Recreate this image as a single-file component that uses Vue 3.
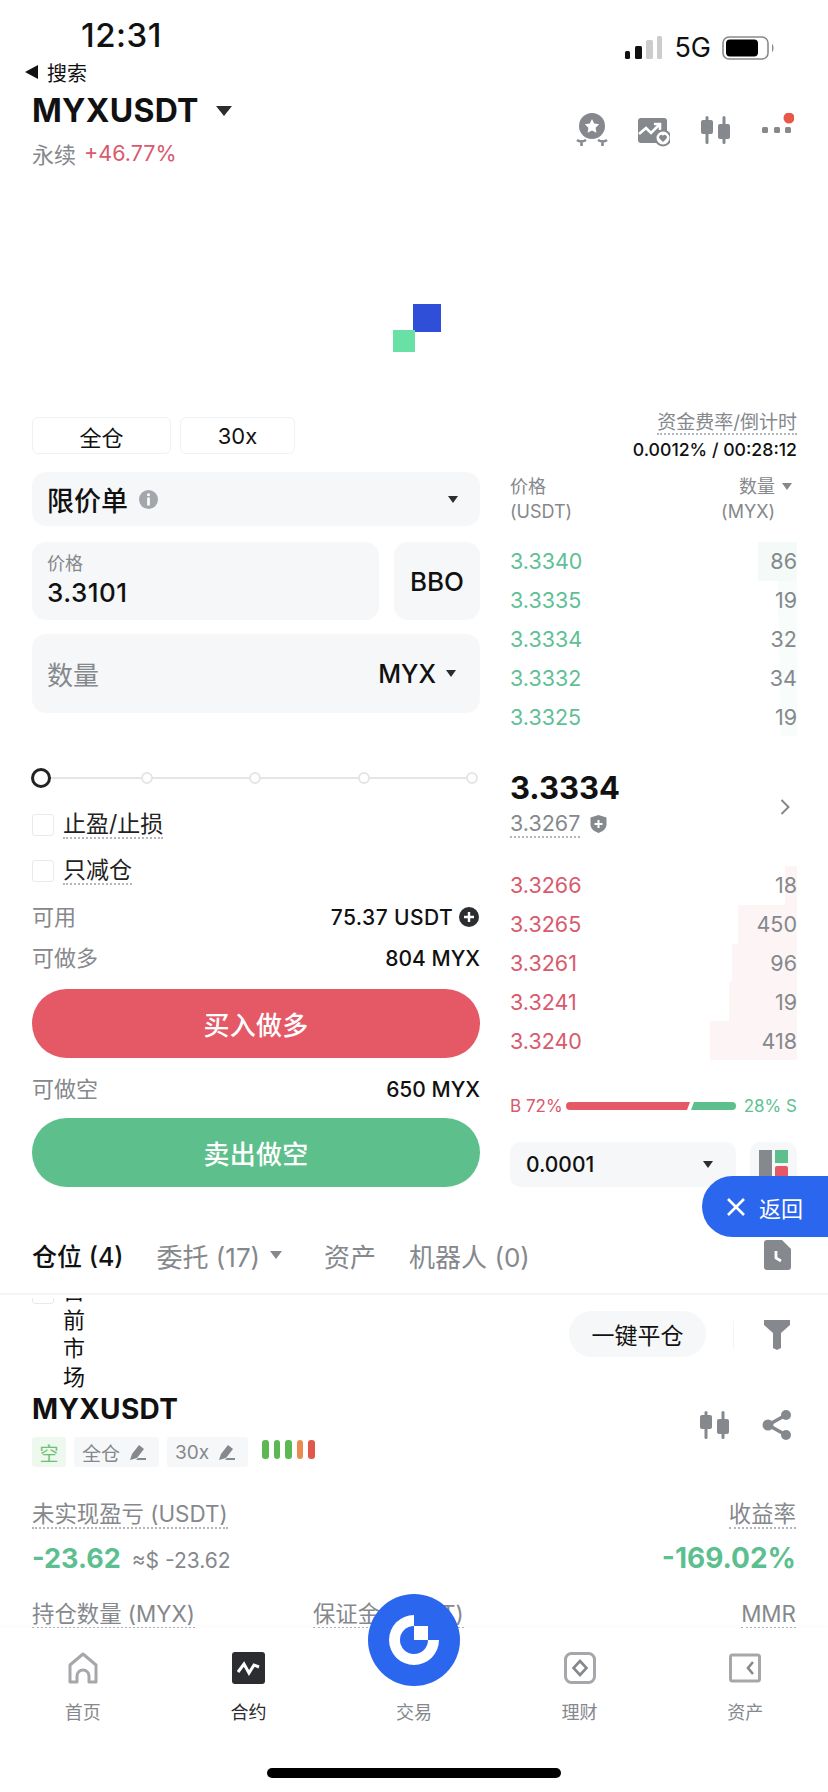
<template>
  <div class="page">
    <div class="status">
      <span class="time">12:31</span>
      <div class="status-right">
        <svg width="38" height="24" viewBox="0 0 38 24">
          <rect x="0" y="15" width="5" height="8" rx="1.5" fill="#111" />
          <rect x="10" y="10" width="7" height="13" rx="1.5" fill="#111" />
          <rect x="21" y="4" width="7" height="19" rx="1.5" fill="#ccc" />
          <rect x="32" y="0" width="5" height="23" rx="1.5" fill="#ccc" />
        </svg>
        <span class="net">5G</span>
        <svg width="54" height="24" viewBox="0 0 54 24">
          <rect x="1" y="1" width="45" height="22" rx="6" fill="none" stroke="#8a8a8a" stroke-width="1.6" />
          <rect x="4" y="3.5" width="32" height="17" rx="4" fill="#000" />
          <path d="M50 8c2 1 2 7 0 8z" fill="#8a8a8a" />
        </svg>
      </div>
    </div>

    <div class="back"><i class="back-arrow"></i><span>搜索</span></div>

    <header class="head">
      <div>
        <div class="pair">MYXUSDT<i class="caret caret-title"></i></div>
        <div class="sub"><span>永续</span><span class="up">+46.77%</span></div>
      </div>
      <div class="head-icons">
        <svg width="32" height="34" viewBox="0 0 32 34">
          <circle cx="16" cy="13" r="13" fill="#85888c" />
          <path d="M16 6l2.2 4.6 5 .7-3.6 3.5.8 5-4.4-2.3-4.4 2.3.8-5-3.6-3.5 5-.7z" fill="#fff" />
          <path d="M1 27q4 3 9 0M5.500 29v4M22 27q5 3 9 0M26.500 29v4" fill="none" stroke="#85888c" stroke-width="2.600" />
        </svg>
        <svg width="32" height="34" viewBox="0 0 32 34">
          <rect x="0" y="5" width="29" height="25" rx="3" fill="#85888c" />
          <path d="M1 21l7-6 5 5 8-8M16 11h6v6" fill="none" stroke="#fff" stroke-width="2.600" />
          <circle cx="25" cy="25" r="7.500" fill="#fff" stroke="#85888c" stroke-width="2" />
          <path d="M25 29l-3.500-3.500a2.200 2.200 0 0 1 3.500-2.700 2.200 2.200 0 0 1 3.500 2.700z" fill="#85888c" />
        </svg>
        <svg width="32" height="34" viewBox="0 0 32 34">
          <rect x="1" y="7" width="12" height="14" rx="2" fill="#85888c" />
          <rect x="5.500" y="3" width="3" height="28" rx="1.500" fill="#85888c" />
          <rect x="18" y="11" width="12" height="15" rx="2" fill="#85888c" />
          <rect x="22.500" y="3" width="3" height="28" rx="1.500" fill="#85888c" />
        </svg>
        <svg width="32" height="34" viewBox="0 0 32 34">
          <rect x="0" y="14" width="6" height="6" rx="1.500" fill="#85888c" />
          <rect x="12" y="14" width="6" height="6" rx="1.500" fill="#85888c" />
          <rect x="23" y="14" width="6" height="6" rx="1.500" fill="#85888c" />
          <circle cx="27" cy="5" r="5.500" fill="#e8584a" />
        </svg>
      </div>
    </header>

    <div class="chart">
      <div class="loader">
        <i class="sq-blue"></i>
        <i class="sq-green"></i>
      </div>
    </div>

    <section class="trade">
      <div class="form">
        <div class="modes">
          <span class="mode mode-wide">全仓</span>
          <span class="mode mode-small">30x</span>
        </div>
        <div class="field order-type">
          <span class="order-name">限价单</span>
          <svg width="19" height="19" viewBox="0 0 19 19">
            <circle cx="9.500" cy="9.500" r="9.500" fill="#a3a6aa" />
            <rect x="8.200" y="3.500" width="2.600" height="2.600" fill="#fff" />
            <rect x="8.200" y="7.500" width="2.600" height="8" fill="#fff" />
          </svg>
          <i class="caret caret-end"></i>
        </div>
        <div class="price-row">
          <div class="field price">
            <span class="price-label">价格</span>
            <span class="price-value">3.3101</span>
          </div>
          <div class="field bbo">BBO</div>
        </div>
        <div class="field qty">
          <span class="qty-label">数量</span>
          <span class="qty-unit">MYX<i class="caret"></i></span>
        </div>
        <div class="slider">
          <i class="knob"></i>
          <i v-for="n in 4" :key="n" class="stop"></i>
        </div>
        <label class="check check-first"><i class="box"></i><span class="dot-line">止盈/止损</span></label>
        <label class="check check-second"><i class="box"></i><span class="dot-line">只减仓</span></label>
        <div class="info info-first">
          <span class="muted">可用</span>
          <span class="info-value">75.37 USDT
            <svg width="20" height="20" viewBox="0 0 20 20">
              <circle cx="10" cy="10" r="10" fill="#2b2d31" />
              <path d="M10 5v10M5 10h10" stroke="#fff" stroke-width="2.400" />
            </svg>
          </span>
        </div>
        <div class="info info-long">
          <span class="muted">可做多</span>
          <span class="info-value">804 MYX</span>
        </div>
        <button class="action buy">买入做多</button>
        <div class="info">
          <span class="muted">可做空</span>
          <span class="info-value">650 MYX</span>
        </div>
        <button class="action sell">卖出做空</button>
      </div>

      <div class="book">
        <div class="funding">
          <span class="funding-label">资金费率/倒计时</span>
          <span class="funding-value">0.0012% / 00:28:12</span>
        </div>
        <div class="book-head">
          <div>价格<br />(USDT)</div>
          <div class="book-head-right">
            <div class="book-qty">数量<br />(MYX)</div>
            <i class="caret caret-gray"></i>
          </div>
        </div>
        <div class="rows">
          <div v-for="row in asks" :key="row.price" class="row">
            <i class="depth depth-ask" :style="{ width: row.depth + 'px', opacity: row.depth > 20 ? 1 : 0.6 }"></i>
            <span class="ask-price">{{ row.price }}</span>
            <span class="row-qty">{{ row.qty }}</span>
          </div>
        </div>
        <div class="mid">
          <div>
            <div class="last">3.3334</div>
            <div class="mark">
              <span class="mark-value">3.3267</span>
              <svg width="17" height="18" viewBox="0 0 17 18">
                <path d="M8.500 0l8 2.500v7c0 4-3.500 7-8 8.500-4.500-1.500-8-4.500-8-8.500v-7z" fill="#85888c" />
                <path d="M8.500 5v8M4.500 9h8" stroke="#fff" stroke-width="2" />
              </svg>
            </div>
          </div>
          <svg class="chev" width="10" height="16" viewBox="0 0 10 16">
            <path d="M1.500 1l7 7-7 7" fill="none" stroke="#85888c" stroke-width="2" />
          </svg>
        </div>
        <div class="rows">
          <div v-for="row in bids" :key="row.price" class="row">
            <i class="depth depth-bid" :style="{ width: row.depth + 'px' }"></i>
            <span class="bid-price">{{ row.price }}</span>
            <span class="row-qty">{{ row.qty }}</span>
          </div>
        </div>
        <div class="ratio">
          <span class="ratio-b">B 72%</span>
          <i class="bar-buy"></i>
          <i class="bar-sell"></i>
          <span class="ratio-s">28% S</span>
        </div>
        <div class="book-foot">
          <div class="step">
            <span>0.0001</span>
            <i class="caret"></i>
          </div>
          <div class="layout-btn">
            <svg width="29" height="32" viewBox="0 0 29 32">
              <rect x="0" y="0" width="13" height="32" fill="#85888c" />
              <rect x="16" y="0" width="13" height="13" fill="#5dbf8b" />
              <rect x="16" y="16" width="13" height="16" rx="2" fill="#e55865" />
            </svg>
          </div>
        </div>
      </div>
    </section>

    <nav class="tabs">
      <span class="tab tab-active">仓位 (4)</span>
      <span class="tab">委托 (17)<i class="caret caret-tab"></i></span>
      <span class="tab">资产</span>
      <span class="tab">机器人 (0)</span>
      <svg class="doc" width="27" height="30" viewBox="0 0 27 30">
        <path d="M3 0h15l9 9v18a3 3 0 0 1-3 3H3a3 3 0 0 1-3-3V3a3 3 0 0 1 3-3z" fill="#85888c" />
        <path d="M12 11v7l5 3" fill="none" stroke="#fff" stroke-width="2.800" />
      </svg>
    </nav>

    <div class="list">
      <div class="toolbar">
        <i class="box toolbar-box"></i>
        <span class="narrow">目前市场</span>
        <button class="close-all">一键平仓</button>
        <i class="rule"></i>
        <svg class="funnel" width="26" height="30" viewBox="0 0 26 30">
          <path d="M0 0h26v5l-9 8v15l-4 2-4-2V13L0 5z" fill="#85888c" />
        </svg>
      </div>

      <div class="pos-head">
        <div>
          <div class="pos-name">MYXUSDT</div>
          <div class="tags">
            <span class="tag tag-short">空</span>
            <span class="tag">全仓
              <svg width="16" height="16" viewBox="0 0 16 16"><path d="M0 16l2-6 7-9 5 4-7 9zM8 14h8v2H6z" fill="#85888c" /></svg>
            </span>
            <span class="tag">30x
              <svg width="16" height="16" viewBox="0 0 16 16"><path d="M0 16l2-6 7-9 5 4-7 9zM8 14h8v2H6z" fill="#85888c" /></svg>
            </span>
            <span class="adl">
              <i v-for="c in adl" :key="c.id" :style="{ background: c.color }"></i>
            </span>
          </div>
        </div>
        <div class="pos-icons">
          <svg width="30" height="30" viewBox="0 0 30 30">
            <rect x="0" y="5" width="12" height="14" rx="2" fill="#85888c" />
            <rect x="4.500" y="1" width="3" height="28" rx="1.500" fill="#85888c" />
            <rect x="17" y="9" width="12" height="15" rx="2" fill="#85888c" />
            <rect x="21.500" y="1" width="3" height="28" rx="1.500" fill="#85888c" />
          </svg>
          <svg width="30" height="30" viewBox="0 0 30 30">
            <path d="M24 5L6 15l18 10" fill="none" stroke="#85888c" stroke-width="3.400" />
            <circle cx="24" cy="5" r="5" fill="#85888c" />
            <circle cx="6" cy="15" r="5.500" fill="#85888c" />
            <circle cx="24" cy="25" r="5" fill="#85888c" />
          </svg>
        </div>
      </div>

      <div class="line line-labels">
        <span class="dot-line muted-line">未实现盈亏 (USDT)</span>
        <span class="dot-line muted-line">收益率</span>
      </div>
      <div class="line line-values">
        <span><b class="pnl">-23.62</b><span class="approx">≈$ -23.62</span></span>
        <b class="pnl pnl-rate">-169.02%</b>
      </div>
      <div class="line line-third">
        <span class="dot-line muted-line">持仓数量 (MYX)</span>
        <span class="dot-line muted-line margin-label">保证金 (USDT)</span>
        <span class="dot-line muted-line mmr">MMR</span>
      </div>
    </div>

    <footer class="tabbar">
      <div class="fab">
        <svg width="50" height="50" viewBox="0 0 50 50">
          <circle cx="25" cy="25" r="25" fill="#fff" />
          <rect x="25" y="0" width="25" height="25" fill="#2b66ee" />
          <circle cx="25" cy="25" r="14" fill="#2b66ee" />
          <rect x="25" y="11" width="14" height="14" fill="#fff" />
        </svg>
      </div>
      <div class="tab-items">
        <div class="tab-item">
          <svg width="32" height="32" viewBox="0 0 32 32">
            <path d="M3 30V13L16 2l13 11v17h-7v-6a6 6 0 0 0-12 0v6z" fill="none" stroke="#a5a7aa" stroke-width="3" stroke-linejoin="round" />
          </svg>
          <span>首页</span>
        </div>
        <div class="tab-item tab-item-active">
          <svg width="33" height="32" viewBox="0 0 33 32">
            <rect x="0" y="0" width="33" height="32" rx="3" fill="#2b2d31" />
            <path d="M6 20l6-8 5 9 5-8 5 2" fill="none" stroke="#fff" stroke-width="3" />
          </svg>
          <span>合约</span>
        </div>
        <div class="tab-item">
          <i class="tab-icon-gap"></i>
          <span>交易</span>
        </div>
        <div class="tab-item">
          <svg width="32" height="32" viewBox="0 0 32 32">
            <rect x="1.500" y="1.500" width="29" height="29" rx="6" fill="none" stroke="#a5a7aa" stroke-width="3" />
            <path d="M16 9l6.500 7-6.500 7-6.500-7z" fill="none" stroke="#85888c" stroke-width="2.600" />
          </svg>
          <span>理财</span>
        </div>
        <div class="tab-item">
          <svg width="32" height="32" viewBox="0 0 32 32">
            <rect x="1.500" y="3" width="29" height="26" rx="2" fill="none" stroke="#a5a7aa" stroke-width="3" />
            <path d="M24 10l-5 6 5 6" fill="none" stroke="#85888c" stroke-width="2.600" />
          </svg>
          <span>资产</span>
        </div>
      </div>
      <i class="home-bar"></i>
    </footer>

    <button class="float-back">
      <svg width="18" height="18" viewBox="0 0 18 18">
        <path d="M1 1l16 16M17 1L1 17" stroke="#fff" stroke-width="2.600" />
      </svg>
      <span>返回</span>
    </button>
  </div>
</template>

<script setup>
const asks = [
  { price: "3.3340", qty: "86", depth: 39 },
  { price: "3.3335", qty: "19", depth: 19 },
  { price: "3.3334", qty: "32", depth: 18 },
  { price: "3.3332", qty: "34", depth: 17 },
  { price: "3.3325", qty: "19", depth: 16 },
];

const bids = [
  { price: "3.3266", qty: "18", depth: 12 },
  { price: "3.3265", qty: "450", depth: 59 },
  { price: "3.3261", qty: "96", depth: 65 },
  { price: "3.3241", qty: "19", depth: 68 },
  { price: "3.3240", qty: "418", depth: 87 },
];

const adl = [
  { id: 1, color: "#5eb851" },
  { id: 2, color: "#5eb851" },
  { id: 3, color: "#5eb851" },
  { id: 4, color: "#ec8b4d" },
  { id: 5, color: "#e2574c" },
];
</script>

<style>
html,
body {
  margin: 0;
  background: #fff;
}
</style>

<style scoped>
.page {
  position: relative;
  width: 828px;
  height: 1792px;
  overflow: hidden;
  display: flex;
  flex-direction: column;
  background: #fff;
  color: #111;
  font-family: Inter, "Noto Sans CJK SC", sans-serif;
}

i {
  display: block;
  font-style: normal;
}

.caret {
  display: inline-block;
  width: 0;
  height: 0;
  border-left: 5.5px solid transparent;
  border-right: 5.5px solid transparent;
  border-top: 7px solid #2b2d31;
}

.status {
  height: 60px;
  flex: none;
  display: flex;
  justify-content: space-between;
  padding: 0 52px 0 81px;
  box-sizing: border-box;
}

.time {
  font-size: 33px;
  font-weight: 500;
  line-height: 34px;
  margin-top: 18px;
  letter-spacing: 0.5px;
}

.status-right {
  display: flex;
  align-items: center;
  gap: 11px;
  height: 24px;
  margin-top: 36px;
}

.net {
  font-size: 27px;
  font-weight: 400;
  line-height: 24px;
}

.back {
  height: 24px;
  flex: none;
  display: flex;
  align-items: center;
  gap: 9px;
  padding-left: 25px;
  font-size: 20px;
}

.back-arrow {
  width: 0;
  height: 0;
  border-top: 7px solid transparent;
  border-bottom: 7px solid transparent;
  border-right: 13px solid #111;
}

.head {
  flex: none;
  display: flex;
  justify-content: space-between;
  padding: 7px 34px 0 32px;
  height: 84px;
  box-sizing: border-box;
}

.pair {
  display: flex;
  align-items: center;
  font-size: 32px;
  font-weight: 700;
  line-height: 40px;
  letter-spacing: 0.3px;
}

.caret-title {
  margin-left: 17px;
  border-left-width: 8px;
  border-right-width: 8px;
  border-top-width: 10px;
}

.sub {
  display: flex;
  gap: 8px;
  align-items: center;
  margin-top: 7px;
  height: 30px;
  font-size: 22px;
  color: #85888c;
}

.up {
  color: #d9596d;
  font-size: 21.5px;
}

.head-icons {
  display: flex;
  gap: 30px;
  margin-top: 22px;
}

.chart {
  flex: none;
  height: 245px;
  display: flex;
  justify-content: center;
  padding-top: 136px;
  box-sizing: border-box;
}

.loader {
  position: relative;
  width: 48px;
  height: 48px;
  margin-left: 6px;
}

.sq-blue {
  position: absolute;
  right: 0;
  top: 0;
  width: 28px;
  height: 28px;
  background: #2f4fd8;
}

.sq-green {
  position: absolute;
  left: 0;
  bottom: 0;
  width: 22px;
  height: 22px;
  background: #68e0a6;
}

.trade {
  flex: none;
  display: flex;
  gap: 30px;
  padding: 0 31px 0 32px;
  height: 775px;
}

.form {
  width: 448px;
  padding-top: 4px;
}

.modes {
  display: flex;
  gap: 9px;
}

.mode {
  height: 37px;
  box-sizing: border-box;
  border: 1px solid #f0f1f2;
  border-radius: 6px;
  display: flex;
  align-items: center;
  justify-content: center;
  font-size: 22px;
}

.mode-wide {
  width: 139px;
}

.mode-small {
  width: 115px;
}

.field {
  background: #f6f7f8;
  border-radius: 14px;
  box-sizing: border-box;
}

.order-type {
  margin-top: 18px;
  height: 54px;
  display: flex;
  align-items: center;
  gap: 11px;
  padding: 0 22px 0 15px;
}

.order-name {
  font-size: 27px;
  font-weight: 500;
}

.caret-end {
  margin-left: auto;
}

.price-row {
  display: flex;
  gap: 15px;
  margin-top: 16px;
}

.price {
  flex: 1;
  height: 78px;
  padding: 10px 15px 0;
  display: flex;
  flex-direction: column;
}

.price-label {
  font-size: 18px;
  line-height: 24px;
  color: #85888c;
}

.price-value {
  font-size: 26px;
  line-height: 32px;
  font-weight: 500;
  margin-top: 1px;
  letter-spacing: 0.5px;
}

.bbo {
  width: 86px;
  height: 78px;
  display: flex;
  align-items: center;
  justify-content: center;
  font-size: 26px;
  font-weight: 500;
}

.qty {
  margin-top: 14px;
  height: 79px;
  display: flex;
  align-items: center;
  justify-content: space-between;
  padding: 0 24px 0 15px;
}

.qty-label {
  font-size: 26px;
  color: #85888c;
}

.qty-unit {
  display: flex;
  align-items: center;
  gap: 10px;
  font-size: 25px;
  font-weight: 500;
}

.slider {
  position: relative;
  margin-top: 55px;
  height: 20px;
  display: flex;
  align-items: center;
  gap: 96.5px;
}

.slider::before {
  content: "";
  position: absolute;
  left: 4px;
  right: 4px;
  top: 9px;
  height: 2px;
  background: #e4e5e6;
}

.knob {
  position: relative;
  width: 20px;
  height: 20px;
  box-sizing: border-box;
  border: 3.5px solid #222;
  border-radius: 50%;
  background: #fff;
  margin: 0 -7px 0 -1px;
}

.stop {
  position: relative;
  width: 12px;
  height: 12px;
  box-sizing: border-box;
  border: 2px solid #e4e5e6;
  border-radius: 50%;
  background: #fff;
}

.check {
  display: flex;
  align-items: center;
  gap: 9px;
  height: 22px;
  font-size: 23px;
  color: #222;
}

.check-first {
  margin-top: 26px;
}

.check-second {
  margin-top: 24px;
}

.box {
  width: 22px;
  height: 22px;
  flex: none;
  box-sizing: border-box;
  border: 1.500px solid #e8e9ea;
  border-radius: 3px;
}

.dot-line {
  border-bottom: 2px dotted #b4b6b9;
  line-height: 26px;
  display: inline-block;
}

.info {
  display: flex;
  align-items: center;
  justify-content: space-between;
  height: 26px;
  margin-top: 17px;
}

.info-first {
  margin-top: 21px;
}

.info-long {
  margin-top: 15px;
  margin-bottom: 19px;
}

.info-long + .action {
  margin-top: 0;
}

.muted {
  font-size: 22px;
  color: #85888c;
  margin-top: -3px;
}

.info-value {
  display: flex;
  align-items: center;
  gap: 6px;
  padding-top: 2px;
  font-size: 21px;
  font-weight: 500;
}

.info-first .info-value {
  margin-right: 1px;
  letter-spacing: 0.4px;
}

.action {
  display: block;
  width: 100%;
  height: 69px;
  margin-top: 17px;
  border: 0;
  border-radius: 35px;
  color: #fff;
  font-family: inherit;
  font-size: 26px;
  font-weight: 500;
  letter-spacing: 0.3px;
}

.buy {
  background: #e55865;
}

.sell {
  background: #5dbf8b;
}

.book {
  width: 287px;
}

.funding {
  display: flex;
  flex-direction: column;
  align-items: flex-end;
}

.funding-label {
  font-size: 19px;
  line-height: 20px;
  color: #85888c;
  border-bottom: 2px dotted #b4b6b9;
}

.funding-value {
  font-size: 17.7px;
  font-weight: 500;
  line-height: 20px;
  margin-top: 5px;
}

.book-head {
  display: flex;
  justify-content: space-between;
  font-size: 18px;
  line-height: 25px;
  color: #85888c;
  margin-top: 14px;
}

.book-head-right {
  display: flex;
  gap: 7px;
  padding-right: 5px;
}

.book-qty {
  text-align: right;
}

.caret-gray {
  margin-top: 9px;
  border-top-color: #85888c;
}

.rows {
  margin-top: 18px;
}

.row {
  position: relative;
  height: 38.800px;
  display: flex;
  align-items: center;
  justify-content: space-between;
  font-size: 21.5px;
}

.depth {
  position: absolute;
  right: 0;
  top: 0;
  bottom: 0;
}

.depth-ask {
  background: #f3faf7;
}

.depth-bid {
  background: #fdf5f5;
}

.ask-price,
.bid-price,
.row-qty {
  position: relative;
}

.ask-price {
  color: #5fbf95;
}

.bid-price {
  color: #d9596d;
}

.row-qty {
  color: #85888c;
}

.mid {
  height: 110px;
  box-sizing: border-box;
  display: flex;
  justify-content: space-between;
  align-items: flex-start;
  padding: 34px 7px 0 0;
  margin-bottom: -1px;
}

.last {
  font-size: 31px;
  font-weight: 700;
  line-height: 36px;
}

.mark {
  display: flex;
  align-items: center;
  gap: 10px;
  margin-top: 4px;
}

.mark-value {
  font-size: 21.5px;
  color: #85888c;
  line-height: 26px;
  border-bottom: 2px dotted #b4b6b9;
}

.chev {
  margin-top: 29px;
}

.mid + .rows {
  margin-top: 21px;
}

.ratio {
  display: flex;
  align-items: center;
  height: 20px;
  margin-top: 36px;
  font-size: 17px;
}

.ratio-b {
  color: #d9596d;
  width: 56px;
  white-space: nowrap;
}

.ratio-s {
  color: #5fbf95;
  margin-left: auto;
  white-space: nowrap;
}

.bar-buy {
  width: 124px;
  height: 8px;
  background: #e55865;
  border-radius: 4px 0 0 4px;
  clip-path: polygon(0 0, 100% 0, calc(100% - 3px) 100%, 0 100%);
}

.bar-sell {
  width: 45px;
  height: 8px;
  margin-left: 1px;
  background: #5dbf8b;
  border-radius: 0 4px 4px 0;
  clip-path: polygon(3px 0, 100% 0, 100% 100%, 0 100%);
}

.book-foot {
  display: flex;
  justify-content: space-between;
  margin-top: 26px;
}

.step {
  width: 226px;
  height: 45px;
  box-sizing: border-box;
  background: #f6f7f8;
  border-radius: 10px;
  display: flex;
  align-items: center;
  justify-content: space-between;
  padding: 0 23px 0 16px;
  font-size: 21px;
  font-weight: 500;
}

.layout-btn {
  width: 47px;
  height: 45px;
  background: #f6f7f8;
  border-radius: 10px;
  padding: 8px 0 0 9px;
  box-sizing: border-box;
  overflow: hidden;
}

.tabs {
  flex: none;
  display: flex;
  align-items: center;
  height: 63px;
  margin-top: 44px;
  margin-bottom: 3px;
  box-sizing: border-box;
  padding: 0 37px 15px 32px;
  border-bottom: 2px solid #f3f4f5;
  color: #85888c;
  gap: 33px;
}

.tab {
  display: flex;
  align-items: center;
  white-space: nowrap;
  font-size: 26px;
}

.tab-active {
  color: #111;
  font-size: 25px;
  font-weight: 500;
}

.caret-tab {
  margin: 0 9px 0 10px;
  border-left-width: 6.5px;
  border-right-width: 6.5px;
  border-top-width: 8px;
  border-top-color: #85888c;
}

.doc {
  margin-left: auto;
}

.list {
  flex: 1;
  min-height: 0;
  overflow: hidden;
  padding: 0 32px;
}

.toolbar {
  display: flex;
  align-items: flex-start;
  height: 114px;
  margin-top: -21px;
}

.toolbar-box {
  margin-top: 5px;
}

.narrow {
  width: 22px;
  margin-left: 9px;
  font-size: 22px;
  line-height: 28.500px;
}

.close-all {
  margin: 34px 0 0 auto;
  width: 137px;
  height: 46px;
  border: 0;
  border-radius: 23px;
  background: #f6f7f8;
  color: #111;
  font-family: inherit;
  font-size: 23px;
}

.rule {
  width: 1px;
  height: 28px;
  margin: 44px 30px 0 27px;
  background: #f3f4f5;
}

.funnel {
  margin: 43px 6px 0 0;
}

.pos-head {
  display: flex;
  justify-content: space-between;
  margin-top: 3px;
}

.pos-name {
  font-size: 28px;
  font-weight: 700;
  line-height: 30px;
  letter-spacing: 0.3px;
}

.tags {
  display: flex;
  align-items: center;
  gap: 8px;
  margin-top: 13px;
}

.tag {
  height: 30px;
  box-sizing: border-box;
  display: flex;
  align-items: center;
  gap: 10px;
  padding: 0 13px 0 8px;
  background: #f6f7f8;
  border-radius: 3px;
  font-size: 19px;
  color: #85888c;
}

.tag-short {
  width: 34px;
  justify-content: center;
  padding: 0;
  background: #eef8ef;
  color: #6cc270;
}

.adl {
  display: flex;
  gap: 5px;
  margin: -6px 0 0 6px;
}

.adl i {
  width: 6.500px;
  height: 19px;
  border-radius: 3px;
}

.pos-icons {
  display: flex;
  gap: 32px;
  margin-top: 16px;
  padding-right: 4px;
}

.line {
  display: flex;
  justify-content: space-between;
  align-items: center;
}

.line-labels {
  margin-top: 34px;
}

.muted-line {
  font-size: 22.4px;
  color: #85888c;
}

.line-values {
  margin-top: 13px;
  height: 32px;
}

.pnl {
  font-size: 27px;
  font-weight: 700;
  color: #5bbf8f;
}

.pnl-rate {
  font-size: 28px;
}

.approx {
  margin-left: 11px;
  font-size: 21px;
  color: #85888c;
}

.line-third {
  margin-top: 27px;
  justify-content: flex-start;
}

.margin-label {
  margin-left: 118px;
}

.mmr {
  margin-left: auto;
}

.tabbar {
  position: relative;
  flex: none;
  height: 164px;
  box-sizing: border-box;
  background: #fff;
  box-shadow: 0 -2px 4px rgba(0, 0, 0, 0.02);
  display: flex;
  flex-direction: column;
  align-items: center;
}

.fab {
  position: absolute;
  left: 368px;
  top: -34px;
  width: 92px;
  height: 92px;
  border-radius: 50%;
  background: #2b66ee;
  display: flex;
  align-items: center;
  justify-content: center;
}

.tab-items {
  width: 100%;
  display: grid;
  grid-template-columns: repeat(5, 1fr);
  padding-top: 24px;
}

.tab-item {
  display: flex;
  flex-direction: column;
  align-items: center;
  gap: 19px;
  font-size: 18px;
  line-height: 20px;
  color: #85888c;
}

.tab-item-active {
  color: #2b2d31;
}

.tab-icon-gap {
  height: 32px;
}

.home-bar {
  width: 294px;
  height: 10px;
  margin-top: 45px;
  border-radius: 5px;
  background: #000;
}

.float-back {
  position: absolute;
  right: 0;
  top: 1176px;
  width: 126px;
  height: 61px;
  box-sizing: border-box;
  border: 0;
  padding: 0 0 0 25px;
  border-radius: 31px 0 0 31px;
  background: #2b66ee;
  color: #fff;
  display: flex;
  align-items: center;
  gap: 14px;
  font-family: inherit;
  font-size: 22px;
}
</style>
